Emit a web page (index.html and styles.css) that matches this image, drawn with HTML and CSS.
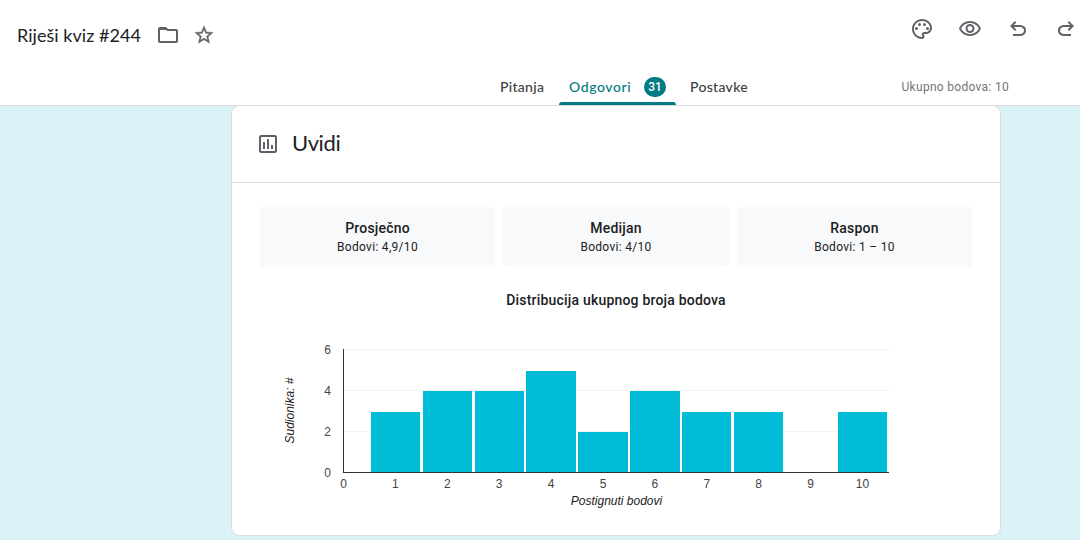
FILE: index.html
```
<!DOCTYPE html>
<html lang="hr">
<head>
    <meta charset="UTF-8">
    <meta name="viewport" content="width=device-width, initial-scale=1.0">
    <title>Riješi kviz #244</title>
    <link rel="stylesheet" href="styles.css">
</head>
<body>
    <header class="header">
        <div class="toolbar">
            <div class="title-group">
                <h1 class="title">Riješi kviz #244</h1>
                <svg class="icon folder" viewBox="0 0 24 24"><path d="M9.17 6l2 2H20v10H4V6h5.17M10 4H4c-1.1 0-1.99.9-1.99 2L2 18c0 1.1.9 2 2 2h16c1.1 0 2-.9 2-2V8c0-1.1-.9-2-2-2h-8l-2-2z"/><path d="M3 5h7l2 2H3z"/></svg>
                <svg class="icon star" viewBox="0 0 24 24"><path d="M22 9.24l-7.19-.62L12 2 9.19 8.63 2 9.24l5.46 4.73L5.82 21 12 17.27 18.18 21l-1.63-7.03L22 9.24zM12 15.4l-3.76 2.27 1-4.28-3.32-2.88 4.38-.38L12 6.1l1.71 4.04 4.38.38-3.32 2.88 1 4.28L12 15.4z"/></svg>
            </div>
            <div class="actions">
                <svg class="icon" viewBox="0 0 24 24"><path d="M12 22C6.49 22 2 17.51 2 12S6.49 2 12 2s10 4.04 10 9c0 3.31-2.69 6-6 6h-1.77c-.28 0-.5.22-.5.5 0 .12.05.23.13.33.41.47.64 1.06.64 1.67A2.5 2.5 0 0 1 12 22zm0-18c-4.41 0-8 3.59-8 8s3.59 8 8 8c.28 0 .5-.22.5-.5a.54.54 0 0 0-.14-.35c-.41-.46-.63-1.05-.63-1.65a2.5 2.5 0 0 1 2.5-2.5H16c2.21 0 4-1.79 4-4 0-3.86-3.59-7-8-7z"/><circle cx="6.5" cy="11.5" r="1.5"/><circle cx="9.5" cy="7.5" r="1.5"/><circle cx="14.5" cy="7.5" r="1.5"/><circle cx="17.5" cy="11.5" r="1.5"/></svg>
                <svg class="icon" viewBox="0 0 24 24"><path d="M12 6c3.79 0 7.17 2.13 8.82 5.5C19.17 14.87 15.79 17 12 17s-7.17-2.13-8.82-5.5C4.83 8.13 8.21 6 12 6m0-2C7 4 2.73 7.11 1 11.5 2.73 15.89 7 19 12 19s9.27-3.11 11-7.5C21.27 7.11 17 4 12 4zm0 5c1.38 0 2.5 1.12 2.5 2.5S13.38 14 12 14s-2.5-1.12-2.5-2.5S10.62 9 12 9m0-2c-2.48 0-4.5 2.02-4.5 4.5S9.52 16 12 16s4.5-2.02 4.5-4.5S14.48 7 12 7z"/></svg>
                <svg class="icon" viewBox="0 -960 960 960"><path d="M280-200v-80h284q63 0 109.500-40T720-420q0-60-46.500-100T564-560H312l104 104-56 56-200-200 200-200 56 56-104 104h252q97 0 169.500 63T800-420q0 94-72.500 157T564-200H280Z"/></svg>
                <svg class="icon" viewBox="0 -960 960 960"><path d="M396-200q-97 0-169.500-63T154-420q0-94 72.500-157T396-640h252L544-744l56-56 200 200-200 200-56-56 104-104H396q-63 0-109.500 40T240-420q0 60 46.500 100T396-280h284v80H396Z"/></svg>
            </div>
        </div>
        <nav class="tabs">
            <a class="tab">Pitanja</a>
            <a class="tab active">Odgovori <span class="badge">31</span></a>
            <a class="tab last">Postavke</a>
            <span class="total">Ukupno bodova: 10</span>
        </nav>
    </header>

    <main class="card">
        <div class="card-header">
            <svg class="icon" viewBox="0 0 24 24"><path d="M19 3H5c-1.1 0-2 .9-2 2v14c0 1.1.9 2 2 2h14c1.1 0 2-.9 2-2V5c0-1.1-.9-2-2-2zm0 16H5V5h14v14zM7 10h2v7H7zm4-3h2v10h-2zm4 6h2v4h-2z"/></svg>
            <h2>Uvidi</h2>
        </div>
        <div class="stats">
            <div class="stat"><strong>Prosječno</strong><span>Bodovi: 4,9/10</span></div>
            <div class="stat"><strong>Medijan</strong><span>Bodovi: 4/10</span></div>
            <div class="stat"><strong>Raspon</strong><span>Bodovi: 1 – 10</span></div>
        </div>
        <h3 class="chart-title">Distribucija ukupnog broja bodova</h3>
        <svg class="chart" viewBox="0 0 712 200" width="712" height="200">
            <g class="grid">
                <rect x="83" y="24" width="546" height="1"/>
                <rect x="83" y="65" width="546" height="1"/>
                <rect x="83" y="106" width="546" height="1"/>
            </g>
            <g class="bars">
                <rect x="111" y="87" width="49" height="60"/>
                <rect x="163" y="66" width="49" height="81"/>
                <rect x="215" y="66" width="49" height="81"/>
                <rect x="266" y="46" width="50" height="101"/>
                <rect x="318" y="107" width="50" height="40"/>
                <rect x="370" y="66" width="50" height="81"/>
                <rect x="422" y="87" width="49" height="60"/>
                <rect x="474" y="87" width="49" height="60"/>
                <rect x="578" y="87" width="49" height="60"/>
            </g>
            <g class="axis">
                <rect x="83" y="24" width="1" height="124"/>
                <rect x="83" y="147" width="546" height="1"/>
            </g>
            <g class="labels y-labels">
                <text x="71" y="29">6</text>
                <text x="71" y="70">4</text>
                <text x="71" y="111">2</text>
                <text x="71" y="152">0</text>
            </g>
            <g class="labels x-labels">
                <text x="83.500" y="163">0</text>
                <text x="135.400" y="163">1</text>
                <text x="187.300" y="163">2</text>
                <text x="239.200" y="163">3</text>
                <text x="291.100" y="163">4</text>
                <text x="343" y="163">5</text>
                <text x="394.900" y="163">6</text>
                <text x="446.800" y="163">7</text>
                <text x="498.700" y="163">8</text>
                <text x="550.600" y="163">9</text>
                <text x="602.500" y="163">10</text>
            </g>
            <text class="axis-title" x="356.500" y="180">Postignuti bodovi</text>
            <text class="axis-title" transform="translate(34 85.500) rotate(-90)">Sudionika: #</text>
        </svg>
    </main>
</body>
</html>
```

FILE: styles.css
```
* {
    box-sizing: border-box;
}

body {
    margin: 0;
    height: 540px;
    overflow: hidden;
    background: #daf3f8;
    color: #202124;
    font-family: Roboto, sans-serif;
}

h1, h2, h3 {
    margin: 0;
    font-weight: 400;
}

.icon {
    width: 24px;
    height: 24px;
    flex: none;
    fill: #5f6368;
}

.header {
    height: 106px;
    background: #fff;
    border-bottom: 1px solid #dadce0;
}

.toolbar {
    display: flex;
    justify-content: space-between;
    height: 70px;
    overflow: hidden;
}

.title-group {
    display: flex;
    align-items: center;
    padding-left: 17px;
}

.title {
    width: 139px;
    padding-bottom: 1px;
    font-family: Lato, sans-serif;
    font-size: 18px;
    line-height: 24px;
    letter-spacing: 0.04px;
    white-space: nowrap;
}

.star {
    width: 22px;
    height: 22px;
    margin-left: 13px;
    stroke: #5f6368;
    stroke-width: 0.4;
}

.actions {
    display: flex;
    gap: 24px;
    padding-top: 17px;
    margin-right: 2px;
}

.tabs {
    display: flex;
    height: 35px;
    padding-left: 490px;
    font-family: Lato, sans-serif;
    font-size: 14px;
    font-weight: 500;
    line-height: 34px;
    letter-spacing: 0.3px;
    color: #3c4043;
}

.tab {
    display: flex;
    align-items: center;
    justify-content: space-between;
    width: 69px;
    padding: 0 10px 2px;
    white-space: nowrap;
}

.tab.active {
    position: relative;
    width: 117px;
    color: #007b83;
    letter-spacing: 0.6px;
}

.tab.active::after {
    content: "";
    position: absolute;
    right: 0;
    bottom: 0;
    left: 0;
    height: 3px;
    border-radius: 3px 3px 0 0;
    background: #007b83;
}

.tab.last {
    width: 86px;
    padding-left: 14px;
}

.badge {
    width: 22px;
    height: 20px;
    border-radius: 10px;
    background: #007b83;
    color: #fff;
    font-family: Roboto, sans-serif;
    font-size: 12px;
    letter-spacing: 0;
    line-height: 20px;
    text-align: center;
}

.total {
    margin-left: 139.5px;
    font-family: Roboto, sans-serif;
    font-size: 12px;
    font-weight: 400;
    letter-spacing: 0.3px;
    color: #757575;
}

.card {
    width: 770px;
    height: 431px;
    margin: -1px 0 0 231px;
    background: #fff;
    border: 1px solid #dadce0;
    border-radius: 8px;
}

.card-header {
    display: flex;
    align-items: center;
    gap: 12px;
    height: 77px;
    padding-left: 24px;
    border-bottom: 1px solid #dadce0;
}

.card-header h2 {
    padding-bottom: 2px;
    font-family: Lato, sans-serif;
    font-size: 22px;
    line-height: 28px;
    letter-spacing: -0.4px;
}

.stats {
    display: grid;
    grid-template-columns: 235px 226px 235px;
    gap: 8px;
    padding: 24px 28px 0;
}

.stat {
    display: flex;
    flex-direction: column;
    height: 60px;
    padding-top: 11px;
    border-radius: 4px;
    background: #f8f9fa;
    text-align: center;
}

.stat strong {
    font-size: 14px;
    font-weight: 500;
    line-height: 20px;
    letter-spacing: 0.2px;
}

.stat span {
    margin-top: 1px;
    font-size: 12px;
    line-height: 16px;
    letter-spacing: 0.3px;
}

.chart-title {
    margin-top: 23px;
    font-size: 14px;
    font-weight: 500;
    line-height: 20px;
    letter-spacing: 0.2px;
    text-align: center;
}

.chart {
    display: block;
    margin: 15px 28px 0;
    font-family: "Liberation Sans", Arial, sans-serif;
    font-size: 12px;
}

.grid {
    fill: #f3f3f3;
}

.bars {
    fill: #00bcd7;
}

.axis {
    fill: #333;
}

.labels {
    fill: #444;
}

.x-labels {
    text-anchor: middle;
}

.y-labels {
    text-anchor: end;
}

.axis-title {
    fill: #222;
    font-style: italic;
    text-anchor: middle;
}
```
